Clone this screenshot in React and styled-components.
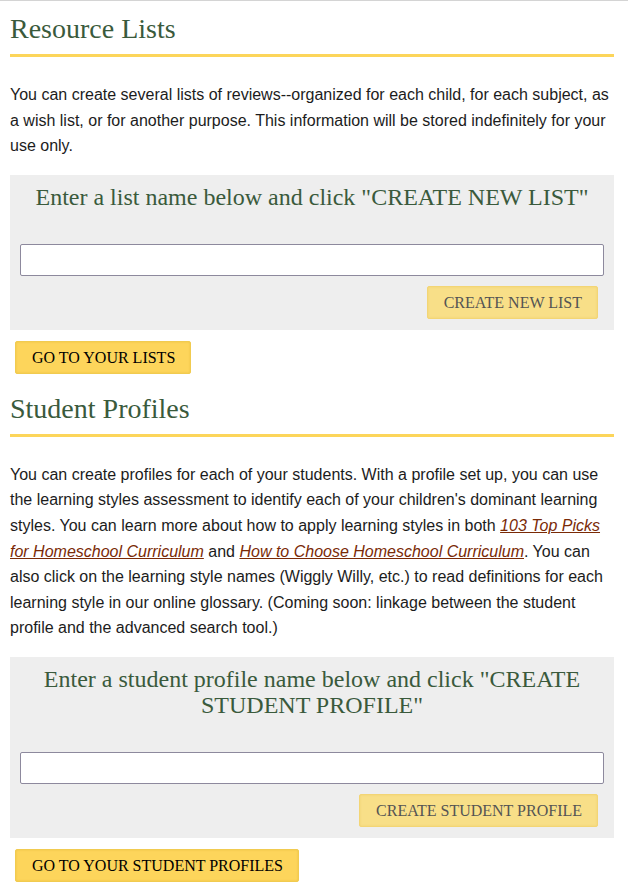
import React from "react";
import styled, { createGlobalStyle } from "styled-components";

const Global = createGlobalStyle`
  html, body { margin: 0; padding: 0; background: #fff; }
  body { font-family: "Liberation Sans", Arial, sans-serif; }
`;

const Page = styled.div`
  border-top: 1px solid #d4d4d4;
  padding: 0 14px 12px 10px;
`;

const SectionTitle = styled.h2`
  margin: ${(p) => (p.$first ? "12px" : "19px")} 0 0;
  padding-bottom: 9px;
  border-bottom: 3px solid #fcd55a;
  font-family: "Liberation Serif", "Times New Roman", serif;
  font-weight: normal;
  font-size: 28px;
  line-height: 32px;
  color: #3a5a3c;
`;

const Para = styled.p`
  margin: 25px 0 16px;
  font-family: "Liberation Sans", Arial, sans-serif;
  font-size: 16px;
  line-height: 25.6px;
  color: #1c1c1c;
`;

const Link = styled.a`
  color: #7a2a06;
  font-style: italic;
  text-decoration: underline;
`;

const FormBox = styled.div`
  background: #eeeeee;
  padding: 9px 10px 10px;
  display: flex;
  flex-direction: column;
`;

const FormTitle = styled.h3`
  margin: 0 0 34px;
  text-align: center;
  font-family: "Liberation Serif", "Times New Roman", serif;
  font-weight: normal;
  font-size: 24px;
  line-height: 26px;
  color: #3a5a3c;
`;

const TextInput = styled.input`
  box-sizing: border-box;
  width: 100%;
  height: 32px;
  margin: 0;
  border: 1px solid #8d899d;
  border-radius: 2px;
  background: #fff;
  font-size: 16px;
`;

const ButtonRow = styled.div`
  display: flex;
  justify-content: flex-end;
  padding: 10px 6px 1px 0;
`;

const Button = styled.button`
  box-sizing: border-box;
  height: 33px;
  padding: 0 15px 0 16px;
  font-family: "Liberation Serif", "Times New Roman", serif;
  font-size: 16px;
  line-height: 19px;
  border-radius: 2px;
  cursor: pointer;
  background: ${(p) => (p.$muted ? "#f8df88" : "#fdd55b")};
  border: 1px solid ${(p) => (p.$muted ? "#f3d575" : "#f1cb50")};
  color: ${(p) => (p.$muted ? "#545454" : "#000")};
  box-shadow: inset 0 0 2px ${(p) => (p.$muted ? "rgba(230,195,90,0.5)" : "rgba(220,180,50,0.6)")};
`;

const GoRow = styled.div`
  display: flex;
  padding: 11px 0 0 5px;
`;

function CreateForm({ title, buttonLabel }) {
  return (
    <FormBox>
      <FormTitle>{title}</FormTitle>
      <TextInput type="text" />
      <ButtonRow>
        <Button $muted>{buttonLabel}</Button>
      </ButtonRow>
    </FormBox>
  );
}

export default function App() {
  return (
    <>
      <Global />
      <Page>
        <SectionTitle $first>Resource Lists</SectionTitle>
        <Para>
          You can create several lists of reviews--organized for each child, for each subject, as a
          wish list, or for another purpose. This information will be stored indefinitely for your
          use only.
        </Para>
        <CreateForm
          title={'Enter a list name below and click "CREATE NEW LIST"'}
          buttonLabel="CREATE NEW LIST"
        />
        <GoRow>
          <Button>GO TO YOUR LISTS</Button>
        </GoRow>

        <SectionTitle>Student Profiles</SectionTitle>
        <Para>
          You can create profiles for each of your students. With a profile set up, you can use the
          learning styles assessment to identify each of your children's dominant learning styles.
          You can learn more about how to apply learning styles in both{" "}
          <Link href="#">103 Top Picks for Homeschool Curriculum</Link> and{" "}
          <Link href="#">How to Choose Homeschool Curriculum</Link>. You can also click on the
          learning style names (Wiggly Willy, etc.) to read definitions for each learning style in
          our online glossary. (Coming soon: linkage between the student profile and the advanced
          search tool.)
        </Para>
        <CreateForm
          title={'Enter a student profile name below and click "CREATE STUDENT PROFILE"'}
          buttonLabel="CREATE STUDENT PROFILE"
        />
        <GoRow>
          <Button>GO TO YOUR STUDENT PROFILES</Button>
        </GoRow>
      </Page>
    </>
  );
}
